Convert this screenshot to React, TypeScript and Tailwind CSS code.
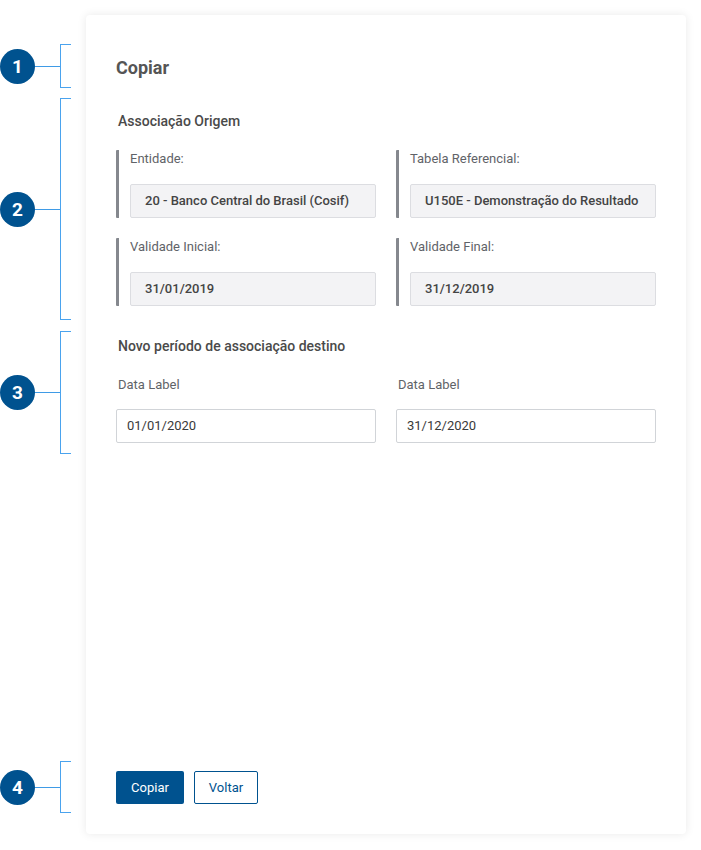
import React from "react";

function Annotation({ n, className }: { n: number; className: string }) {
  return (
    <div className={"flex items-center " + className}>
      <div className="w-[35px] h-[35px] shrink-0 rounded-full bg-[#00528f] text-white flex items-center justify-center text-[19px] font-bold leading-none">
        {n}
      </div>
      <div className="w-[25px] h-px bg-[#3f9be6]" />
      <div className="w-[11px] self-stretch border-l border-y border-[#4aa3ee]" />
    </div>
  );
}

function ReadField({ label, value }: { label: string; value: string }) {
  return (
    <div className="border-l-[3px] border-[#85888e] rounded-[1px] pl-[11px] flex flex-col">
      <div className="text-[13px] leading-[18px] text-[#5f6368]">{label}</div>
      <div className="mt-[16px] h-[34px] bg-[#f3f3f5] border border-[#dcdde1] rounded-[2px] flex items-center px-[14px] text-[13px] font-medium text-[#444444] whitespace-nowrap overflow-hidden">
        {value}
      </div>
    </div>
  );
}

function DateField({ value }: { value: string }) {
  return (
    <div className="flex flex-col">
      <div className="pl-[2px] text-[13px] leading-[18px] text-[#5f6368]">Data Label</div>
      <div className="mt-[15px] h-[34px] bg-white border border-[#d1d4d8] rounded-[2px] flex items-center px-[10px] text-[13px] text-[#3a3a3a]">
        {value}
      </div>
    </div>
  );
}

export default function App() {
  return (
    <div className="w-[701px] h-[850px] bg-white flex items-start" style={{ fontFamily: "Roboto, 'Noto Sans', sans-serif" }}>
      <div className="w-[86px] shrink-0 pt-[44px] flex flex-col">
        <Annotation n={1} className="h-[44px]" />
        <Annotation n={2} className="h-[222px] mt-[10px]" />
        <Annotation n={3} className="h-[123px] mt-[11px]" />
        <Annotation n={4} className="h-[52px] mt-[307px]" />
      </div>
      <div className="mt-[15px] w-[600px] h-[819px] bg-white rounded-[4px] shadow-[0_0_10px_rgba(0,0,0,0.09)] pt-[41px] px-[30px] pb-[30px] flex flex-col">
        <div className="text-[18px] leading-[24px] font-bold text-[#555555]">Copiar</div>
        <div className="mt-[31px] pl-[2px] text-[14px] leading-[20px] font-medium text-[#4a4a4a]">Associação Origem</div>
        <div className="mt-[19px] grid grid-cols-2 gap-x-[20px] gap-y-[20px]">
          <ReadField label="Entidade:" value="20 - Banco Central do Brasil (Cosif)" />
          <ReadField label="Tabela Referencial:" value="U150E - Demonstração do Resultado" />
          <ReadField label="Validade Inicial:" value="31/01/2019" />
          <ReadField label="Validade Final:" value="31/12/2019" />
        </div>
        <div className="mt-[30px] pl-[2px] text-[14px] leading-[20px] font-medium text-[#4a4a4a]">Novo período de associação destino</div>
        <div className="mt-[20px] grid grid-cols-2 gap-x-[20px]">
          <DateField value="01/01/2020" />
          <DateField value="31/12/2020" />
        </div>
        <div className="flex-1" />
        <div className="flex gap-[10px]">
          <button className="h-[33px] w-[68px] bg-[#00528f] text-white text-[13px] rounded-[2px]">Copiar</button>
          <button className="h-[33px] w-[64px] bg-white border border-[#00528f] text-[#00528f] text-[13px] rounded-[2px]">Voltar</button>
        </div>
      </div>
    </div>
  );
}
